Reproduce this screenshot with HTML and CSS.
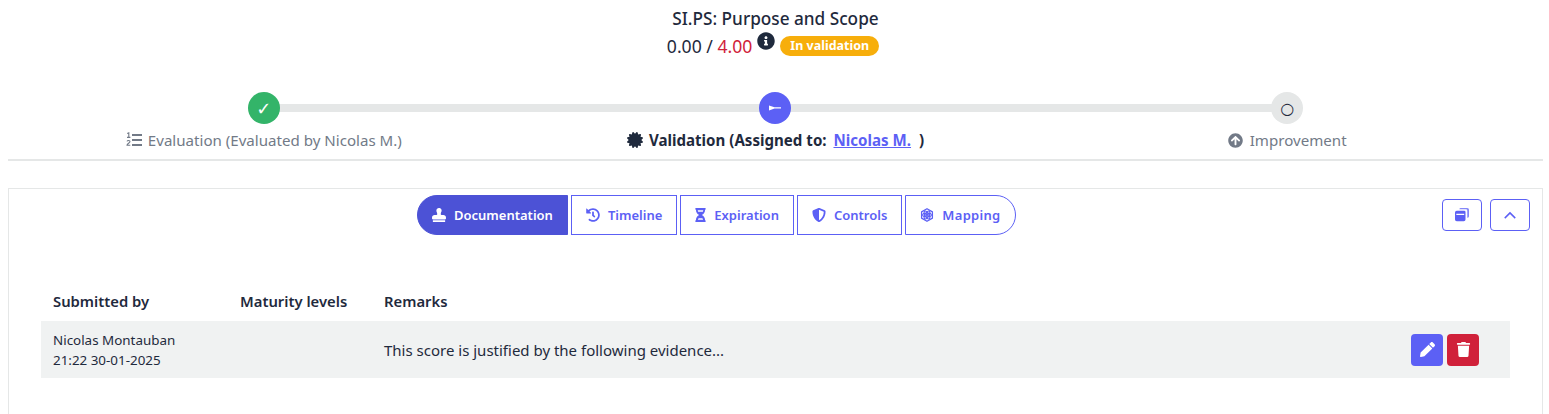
FILE: index.html
```html
<!DOCTYPE html>
<html lang="en">
<head>
<meta charset="utf-8">
<title>SI.PS: Purpose and Scope</title>
<link rel="stylesheet" href="styles.css">
</head>
<body>
<header class="head">
  <h1 class="title">SI.PS: Purpose and Scope</h1>
  <div class="score">
    <span>0.00 / <span class="max">4.00</span></span>
    <svg class="info" viewBox="0 0 512 512"><path d="M256 8C119.043 8 8 119.083 8 256c0 136.997 111.043 248 248 248s248-111.003 248-248C504 119.083 392.957 8 256 8zm0 110c23.196 0 42 18.804 42 42s-18.804 42-42 42-42-18.804-42-42 18.804-42 42-42zm56 254c0 6.627-5.373 12-12 12h-88c-6.627 0-12-5.373-12-12v-24c0-6.627 5.373-12 12-12h12v-64h-12c-6.627 0-12-5.373-12-12v-24c0-6.627 5.373-12 12-12h64c6.627 0 12 5.373 12 12v100h12c6.627 0 12 5.373 12 12v24z"/></svg>
    <span class="badge">In validation</span>
  </div>
</header>

<section class="stepper">
  <div class="step">
    <div class="dot dot-done">✓</div>
    <div class="label label-muted">
      <svg class="ico-label" viewBox="0 0 16 16"><path d="M1.2 1.6 2.8.9v4.4M1 5.4h3.4M1 9.4c.4-1.2 3-1.3 3 .2 0 1.2-3 2.2-3 3.6h3.3" class="num"/><rect x="6" y="2" width="10" height="2"/><rect x="6" y="7" width="10" height="2"/><rect x="6" y="12" width="10" height="2"/></svg>
      Evaluation (Evaluated by Nicolas M.)
    </div>
  </div>
  <div class="step">
    <div class="dot dot-active"><svg class="pin" viewBox="0 0 12 6"><path d="M0 .4 5.500 2.200H12v1.200H5.500L0 5.400z"/></svg></div>
    <div class="label label-current">
      <svg class="ico-label" viewBox="0 0 512 512"><path d="M458.622 255.92l45.985-45.005c13.708-12.977 7.316-36.039-10.664-40.339l-62.65-15.99 17.661-62.015c4.991-17.838-11.829-34.663-29.661-29.671l-61.994 17.667-15.984-62.671C337.085.197 313.765-6.276 300.99 7.228L256 53.57 211.011 7.229c-12.63-13.351-36.047-7.234-40.325 10.668L154.702 80.57 92.708 62.903C74.874 57.911 58.056 74.74 63.047 92.578l17.661 62.015-62.65 15.99C.069 174.889-6.31 197.938 7.392 210.92l45.985 45.005-45.985 45.004c-13.708 12.977-7.316 36.039 10.664 40.339l62.65 15.99-17.661 62.015c-4.991 17.838 11.829 34.663 29.661 29.671l61.994-17.667 15.984 62.671c4.439 18.575 27.696 24.018 40.325 10.668L256 458.61l44.989 46.001c12.5 13.488 35.987 7.486 40.325-10.668l15.984-62.671 61.994 17.667c17.832 4.992 34.65-11.837 29.661-29.671l-17.661-62.015 62.65-15.99c17.98-4.3 24.372-27.362 10.664-40.339l-45.985-45.004z"/></svg>
      Validation (Assigned to:&nbsp;<a class="assignee" href="#">Nicolas M.</a>&nbsp;)
    </div>
  </div>
  <div class="step">
    <div class="dot dot-todo">○</div>
    <div class="label label-muted">
      <svg class="ico-label ico-up" viewBox="0 0 512 512"><path d="M8 256C8 119 119 8 256 8s248 111 248 248-111 248-248 248S8 393 8 256zm143.6 28.9l72.4-75.5V392c0 13.3 10.7 24 24 24h16c13.3 0 24-10.7 24-24V209.4l72.4 75.5c9.3 9.7 24.8 9.9 34.3.4l10.9-11c9.4-9.4 9.4-24.6 0-33.9L273 107.7c-9.4-9.4-24.6-9.4-33.9 0L106.3 240.4c-9.4 9.4-9.4 24.6 0 33.9l10.9 11c9.6 9.5 25.1 9.3 34.4-.4z"/></svg>
      Improvement
    </div>
  </div>
</section>

<main class="card">
  <div class="toolbar">
    <nav class="tabs">
      <a class="tab tab-first tab-on" href="#"><svg class="tab-ico" viewBox="0 0 512 512"><path d="M32 512h448v-64H32v64zm384-256h-66.56c-16.26 0-29.44-13.18-29.44-29.44v-9.46c0-27.37 8.88-53.41 21.46-77.72 9.11-17.61 12.9-38.39 9.05-60.42-6.77-38.78-38.47-70.7-77.26-77.45C212.62-9.04 160 37.33 160 96c0 14.16 3.12 27.54 8.69 39.58C182.02 164.43 192 194.7 192 226.49v.07c0 16.26-13.18 29.44-29.44 29.44H96c-53.02 0-96 42.98-96 96v32c0 17.67 14.33 32 32 32h448c17.67 0 32-14.33 32-32v-32c0-53.02-42.98-96-96-96z"/></svg>Documentation</a>
      <a class="tab" href="#"><svg class="tab-ico" viewBox="0 0 512 512"><path d="M504 255.531c.253 136.64-111.18 248.372-247.82 248.468-59.015.042-113.223-20.53-155.822-54.911-11.077-8.94-11.905-25.541-1.839-35.607l11.267-11.267c8.609-8.609 22.353-9.551 31.891-1.984C173.062 425.135 212.781 440 256 440c101.705 0 184-82.311 184-184 0-101.705-82.311-184-184-184-48.814 0-93.149 18.969-126.068 49.932l50.754 50.754c10.08 10.08 2.941 27.314-11.313 27.314H24c-8.837 0-16-7.163-16-16V38.627c0-14.254 17.234-21.393 27.314-11.314l49.372 49.372C129.209 34.136 189.552 8 256 8c136.81 0 247.747 110.78 248 247.531zm-180.912 78.784l9.823-12.63c8.138-10.463 6.253-25.542-4.21-33.679L288 256.349V152c0-13.255-10.745-24-24-24h-16c-13.255 0-24 10.745-24 24v135.651l65.409 50.874c10.463 8.137 25.541 6.253 33.679-4.21z"/></svg>Timeline</a>
      <a class="tab" href="#"><svg class="tab-ico tab-ico-narrow" viewBox="0 0 384 512"><path fill-rule="evenodd" d="M360 64c13.255 0 24-10.745 24-24V24c0-13.255-10.745-24-24-24H24C10.745 0 0 10.745 0 24v16c0 13.255 10.745 24 24 24 0 90.965 51.016 167.734 120.842 192C75.016 280.266 24 357.035 24 448c-13.255 0-24 10.745-24 24v16c0 13.255 10.745 24 24 24h336c13.255 0 24-10.745 24-24v-16c0-13.255-10.745-24-24-24 0-90.965-51.016-167.734-120.842-192C308.984 231.734 360 154.965 360 64zM92 80h200c-3 24-7 40-14 54H106c-7-14-11-30-14-54zm4 352c6-22 14-40 28-54h136c14 14 22 32 28 54z"/></svg>Expiration</a>
      <a class="tab" href="#"><svg class="tab-ico" viewBox="0 0 512 512"><path d="M466.5 83.7l-192-80a48.15 48.15 0 0 0-36.9 0l-192 80C27.7 91.1 16 108.6 16 128c0 198.5 114.5 335.7 221.5 380.3 11.8 4.9 25.1 4.9 36.9 0C360.1 472.6 496 349.3 496 128c0-19.4-11.7-36.9-29.5-44.3zM256.1 446.3l-.1-381 175.9 73.3c-3.3 151.4-82.1 261.1-175.8 307.7z"/></svg>Controls</a>
      <a class="tab tab-last" href="#"><svg class="tab-ico" viewBox="0 0 16 16"><path class="hex" d="M8 .8l6.200 3.600v7.200L8 15.200l-6.200-3.600V4.400z"/><g class="atom"><ellipse cx="8" cy="8" rx="5" ry="2.200"/><ellipse cx="8" cy="8" rx="5" ry="2.200" transform="rotate(60 8 8)"/><ellipse cx="8" cy="8" rx="5" ry="2.200" transform="rotate(120 8 8)"/></g><circle cx="8" cy="8" r="1.300"/></svg>Mapping</a>
    </nav>
    <div class="actions">
      <button class="outline-btn"><svg class="btn-ico" viewBox="0 0 16 16"><path d="M5 1.500A1.500 1.500 0 0 1 6.500 0H14a2 2 0 0 1 2 2v7.500a1.500 1.500 0 0 1-1.500 1.500H14V3a1.500 1.500 0 0 0-1.500-1.500H5z" opacity=".75"/><path fill-rule="evenodd" d="M2 3h8.500A1.500 1.500 0 0 1 12 4.500V13a2 2 0 0 1-2 2H2a2 2 0 0 1-2-2V5a2 2 0 0 1 2-2zm-.5 3.600v1.400h9V6.600z"/></svg></button>
      <button class="outline-btn"><svg class="btn-ico chev" viewBox="0 0 16 10"><path d="M2 8l6-6 6 6"/></svg></button>
    </div>
  </div>

  <table class="grid">
    <thead>
      <tr><th class="c1">Submitted by</th><th class="c2">Maturity levels</th><th>Remarks</th><th></th></tr>
    </thead>
    <tbody>
      <tr>
        <td class="who">Nicolas Montauban<br>21:22 30-01-2025</td>
        <td></td>
        <td>This score is justified by the following evidence...</td>
        <td class="row-actions">
          <span class="row-btns">
            <button class="solid-btn edit"><svg class="solid-ico" viewBox="0 0 512 512"><path d="M497.9 142.1l-46.100 46.100c-4.700 4.700-12.300 4.700-17 0l-111-111c-4.700-4.700-4.700-12.300 0-17l46.100-46.100c18.700-18.700 49.100-18.700 67.900 0l60.100 60.100c18.800 18.700 18.800 49.100 0 67.900zM284.200 99.800L21.600 362.400.4 483.900c-2.900 16.400 11.400 30.600 27.800 27.800l121.500-21.300 262.600-262.600c4.700-4.700 4.700-12.300 0-17l-111-111c-4.800-4.700-12.400-4.700-17.100 0z"/></svg></button>
            <button class="solid-btn del"><svg class="solid-ico" viewBox="0 0 448 512"><path d="M432 32H312l-9.400-18.700A24 24 0 0 0 281.100 0H166.800a23.720 23.720 0 0 0-21.400 13.300L136 32H16A16 16 0 0 0 0 48v32a16 16 0 0 0 16 16h416a16 16 0 0 0 16-16V48a16 16 0 0 0-16-16zM53.200 467a48 48 0 0 0 47.900 45h245.800a48 48 0 0 0 47.900-45L416 128H32z"/></svg></button>
          </span>
        </td>
      </tr>
    </tbody>
  </table>
</main>
</body>
</html>
```
FILE: styles.css
```css
* { box-sizing: border-box; }
html, body { height: 100%; }
body {
  margin: 0;
  padding: 0 6px 0 8px;
  overflow: hidden;
  background: #fff;
  color: #1f2a3d;
  font-family: "Noto Sans", "Open Sans", sans-serif;
  font-size: 15px;
}

.head { display: flex; flex-direction: column; align-items: center; padding-top: 8px; }
.title { margin: 0; font-size: 17.2px; font-weight: 500; line-height: 22px; }
.score { display: flex; align-items: center; height: 28px; margin-top: 2px; padding-right: 5px; font-size: 17.6px; }
.max { color: #d0213a; }
.info { width: 18px; height: 18px; fill: #1f2a3d; margin: -11px 5px 0 5px; }
.badge {
  background: #f7ae0b;
  color: #fff;
  font-size: 12.5px;
  font-weight: 700;
  line-height: 20px;
  padding: 0 10px;
  border-radius: 10px;
}

.stepper {
  display: grid;
  grid-template-columns: repeat(3, 1fr);
  margin-top: 32px;
  height: 69px;
  border-bottom: 2px solid #e5e7e7;
}
.step { display: flex; flex-direction: column; align-items: center; position: relative; }
.step:not(:last-child)::after {
  content: "";
  position: absolute;
  left: 50%;
  width: 100%;
  top: 12px;
  height: 8px;
  background: #e5e7e7;
}
.dot {
  position: relative;
  z-index: 1;
  width: 32px;
  height: 32px;
  border-radius: 50%;
  display: flex;
  align-items: center;
  justify-content: center;
  font-family: "DejaVu Sans", sans-serif;
  font-size: 18px;
}
.dot-done { background: #33b469; color: #fff; }
.dot-active { background: #5c60f5; }
.dot-todo { background: #e5e7e7; color: #1f2a3d; font-size: 16px; }
.pin { width: 12px; height: 6px; fill: #fff; }
.label { display: flex; align-items: center; margin-top: 5px; font-size: 15.1px; line-height: 22px; white-space: nowrap; }
.label-muted { color: #727a87; }
.label-current { font-weight: 700; }
.ico-label { width: 16px; height: 16px; fill: currentColor; margin-right: 6px; }
.ico-up { width: 15px; height: 15px; margin-right: 7px; }
.num { fill: none; stroke: currentColor; stroke-width: 1.1; }
.assignee { color: #5c60f5; margin: 0 4px 0 3px; }

.card {
  margin-top: 27px;
  border: 1px solid #e5e7e7;
  border-bottom: 0;
  height: 240px;
  padding: 6px 12px 0 32px;
}
.toolbar { display: flex; justify-content: space-between; align-items: flex-start; padding-left: 376px; }
.tabs { display: flex; gap: 3px; }
.tab {
  display: flex;
  align-items: center;
  height: 40px;
  padding: 0 14px;
  border: 1px solid #5c60f5;
  color: #5c60f5;
  font-size: 13px;
  font-weight: 600;
  text-decoration: none;
  white-space: nowrap;
}
.tab-first { border-radius: 20px 0 0 20px; }
.tab-last { border-radius: 0 20px 20px 0; min-width: 110px; letter-spacing: .3px; }
.tab-on { background: #4c52d6; border-color: #4c52d6; color: #fff; }
.tab-ico { width: 14px; height: 14px; fill: currentColor; margin-right: 8px; }
.tab-ico-narrow { width: 11px; }
.hex { fill: none; stroke: currentColor; stroke-width: 1.4; stroke-linejoin: round; }
.atom { fill: none; stroke: currentColor; stroke-width: 1.3; }

.actions { display: flex; gap: 8px; padding-top: 4px; }
.outline-btn {
  display: flex;
  align-items: center;
  justify-content: center;
  width: 40px;
  height: 32px;
  padding: 0;
  background: #fff;
  border: 1px solid #5c60f5;
  border-radius: 4px;
}
.btn-ico { width: 14px; height: 14px; fill: #5c60f5; }
.chev { height: 9px; fill: none; stroke: #5c60f5; stroke-width: 1.7; }

.grid { width: 1469px; margin-top: 50px; border-collapse: collapse; table-layout: fixed; }
.c1 { width: 187px; }
.c2 { width: 144px; }
.grid th {
  text-align: left;
  font-size: 14.8px;
  font-weight: 600;
  height: 36px;
  padding: 0 12px 5px;
}
.grid td { background: #f0f2f2; height: 57px; padding: 0 12px; font-size: 15px; }
.grid td.who { font-size: 13.4px; line-height: 20px; white-space: nowrap; }
.grid td.row-actions { width: 400px; text-align: right; padding-right: 31px; }
.grid th:last-child { width: 400px; }
.grid td:nth-child(3) { white-space: nowrap; }
.row-btns { display: inline-flex; gap: 4px; vertical-align: middle; }
.solid-btn {
  display: flex;
  align-items: center;
  justify-content: center;
  width: 32px;
  height: 32px;
  padding: 0;
  border: 0;
  border-radius: 4px;
}
.edit { background: #5c60f5; }
.del { background: #d0213a; }
.solid-ico { width: 15px; height: 15px; fill: #fff; }
```
